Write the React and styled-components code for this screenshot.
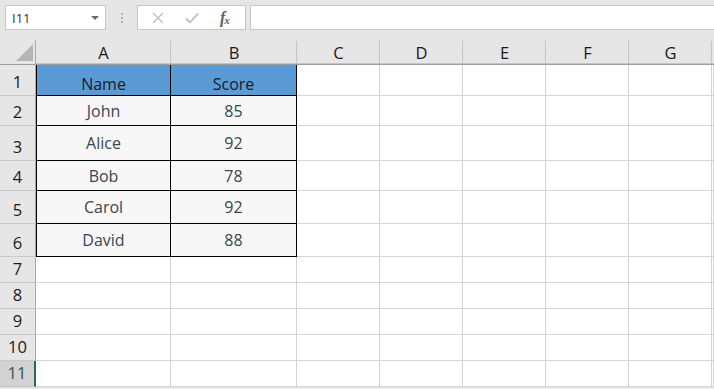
import React from "react";
import styled, { createGlobalStyle } from "styled-components";

const GlobalStyle = createGlobalStyle`
    html, body {
        margin: 0;
        padding: 0;
        background: #ffffff;
        overflow: hidden;
    }
    body {
        font-family: "Open Sans", "Noto Sans", "Liberation Sans", sans-serif;
    }
`;

const COLUMNS = ['A', 'B', 'C', 'D', 'E', 'F', 'G'];
const COL_WIDTHS = [135, 126, 83, 83, 83, 83, 83];
const ROW_HEIGHTS = [31, 30, 35, 30, 33, 33, 26, 26, 26, 26, 26];
const SELECTED_ROW = 11;

const TABLE = [
    ['Name', 'Score'],
    ['John', '85'],
    ['Alice', '92'],
    ['Bob', '78'],
    ['Carol', '92'],
    ['David', '88'],
];

const Page = styled.div`
    width: 714px;
    height: 389px;
    background: #e6e6e6;
    display: flex;
    flex-direction: column;
    overflow: hidden;
`;

const Toolbar = styled.div`
    height: 40px;
    box-sizing: border-box;
    padding: 5px 0 0 5px;
    display: flex;
    align-items: flex-start;
`;

const NameBox = styled.div`
    width: 101px;
    height: 25px;
    box-sizing: border-box;
    background: #fff;
    border: 1px solid #c6c6c6;
    display: flex;
    align-items: center;
    justify-content: space-between;
    padding: 0 6px 0 6px;
    font-size: 13px;
    color: #333;
`;

const Caret = styled.span`
    width: 0;
    height: 0;
    border-left: 4px solid transparent;
    border-right: 4px solid transparent;
    border-top: 4px solid #6a6a6a;
    margin-top: 1px;
`;

const Grip = styled.div`
    width: 31px;
    height: 25px;
    display: flex;
    flex-direction: column;
    align-items: center;
    justify-content: center;
    gap: 2px;
`;

const GripDot = styled.span`
    width: 2px;
    height: 2px;
    background: #b3b3b3;
`;

const FormulaButtons = styled.div`
    width: 109px;
    height: 25px;
    box-sizing: border-box;
    background: #fff;
    border: 1px solid #c6c6c6;
    display: flex;
    align-items: center;
    padding-left: 12px;
    gap: 19px;
`;

const IconBox = styled.span`
    width: 15px;
    height: 15px;
    display: flex;
    align-items: center;
    justify-content: center;
`;

const Fx = styled.span`
    font-family: "Liberation Serif", "DejaVu Serif", serif;
    font-style: italic;
    font-weight: bold;
    font-size: 16px;
    color: #5f5f5f;
    letter-spacing: -1px;
    margin-left: 2px;
    & sub {
        font-size: 11px;
        vertical-align: -1px;
    }
`;

const FormulaInput = styled.div`
    flex: 1;
    height: 25px;
    margin-left: 4px;
    box-sizing: border-box;
    background: #fff;
    border: 1px solid #c6c6c6;
    border-right: none;
`;

const Sheet = styled.div`
    display: grid;
    grid-template-columns: 36px ${COL_WIDTHS.map(w => `${w}px`).join(' ')} 1fr;
    grid-template-rows: 25px ${ROW_HEIGHTS.map(h => `${h}px`).join(' ')};
    background: #fff;
`;

const Corner = styled.div`
    background: #e6e6e6;
    border-right: 1px solid #ababab;
    border-bottom: 1px solid #9e9e9e;
    box-sizing: border-box;
    display: flex;
    align-items: flex-end;
    justify-content: flex-end;
    padding: 0 2px 3px 0;
    &::after {
        content: "";
        width: 17px;
        height: 17px;
        background: #b5b5b5;
        clip-path: polygon(100% 0, 100% 100%, 0 100%);
    }
`;

const ColHeader = styled.div`
    background: #e6e6e6;
    box-sizing: border-box;
    border-bottom: 1px solid #9e9e9e;
    box-shadow: inset 0 -1px 0 #c4c4c4;
    display: flex;
    align-items: center;
    justify-content: center;
    font-size: 16.5px;
    color: #1a1a1a;
    position: relative;
    &::after {
        content: "";
        position: absolute;
        right: 0;
        top: 1px;
        bottom: 1px;
        width: 1px;
        background: ${p => (p.$last ? 'transparent' : '#c4c4c4')};
    }
`;

const RowHeader = styled.div`
    background: ${p => (p.$selected ? '#d2d2d2' : '#e6e6e6')};
    box-sizing: border-box;
    border-bottom: 1px solid #c8c8c8;
    border-right: ${p => (p.$selected ? '2px solid #217346' : '1px solid #ababab')};
    display: flex;
    align-items: flex-end;
    justify-content: center;
    padding-bottom: 1px;
    font-size: 16.5px;
    line-height: 24px;
    color: ${p => (p.$selected ? '#2f5a41' : '#1a1a1a')};
`;

const Cell = styled.div`
    box-sizing: border-box;
    background: ${p => (p.$head ? '#5b9bd5' : p.$table ? '#f7f7f7' : '#fff')};
    border-right: 1px solid ${p => (p.$table ? '#000' : '#d4d4d4')};
    border-bottom: 1px solid ${p => (p.$table ? '#000' : '#d4d4d4')};
    border-left: ${p => (p.$firstCol ? '1px solid #000' : 'none')};
    display: flex;
    align-items: center;
    justify-content: center;
    font-size: 16px;
    color: ${p => (p.$head ? '#13202e' : '#3a4552')};
    padding-top: ${p => (p.$head ? '7px' : '0')};
`;

const CrossIcon = () => (
    <svg width="12" height="12" viewBox="0 0 12 12">
        <path d="M1 1 L11 11 M11 1 L1 11" stroke="#bdbdbd" strokeWidth="1.3" fill="none" />
    </svg>
);

const CheckIcon = () => (
    <svg width="14" height="12" viewBox="0 0 14 12">
        <path d="M1 6.5 L5 10.5 L13 1.5" stroke="#bdbdbd" strokeWidth="1.8" fill="none" />
    </svg>
);

const renderRow = (height, r) => {
    const rowNum = r + 1;
    const tableRow = TABLE[r];
    return (
        <React.Fragment key={rowNum}>
            <RowHeader $selected={rowNum === SELECTED_ROW}>{rowNum}</RowHeader>
            {COLUMNS.map((col, c) => {
                const inTable = tableRow && c < 2;
                return (
                    <Cell key={col}
                        $table={inTable}
                        $head={inTable && r === 0}
                        $firstCol={inTable && c === 0}>
                        {inTable ? tableRow[c] : null}
                    </Cell>
                );
            })}
            <Cell />
        </React.Fragment>
    );
};

const App = () => {
    return (
        <Page>
            <GlobalStyle />
            <Toolbar>
                <NameBox>
                    <span>I11</span>
                    <Caret />
                </NameBox>
                <Grip>
                    <GripDot />
                    <GripDot />
                    <GripDot />
                </Grip>
                <FormulaButtons>
                    <IconBox><CrossIcon /></IconBox>
                    <IconBox><CheckIcon /></IconBox>
                    <Fx>f<sub>x</sub></Fx>
                </FormulaButtons>
                <FormulaInput />
            </Toolbar>
            <Sheet>
                <Corner />
                {COLUMNS.map(col => (
                    <ColHeader key={col}>{col}</ColHeader>
                ))}
                <ColHeader $last />
                {ROW_HEIGHTS.map((h, r) => renderRow(h, r))}
            </Sheet>
        </Page>
    );
};

export default App;
